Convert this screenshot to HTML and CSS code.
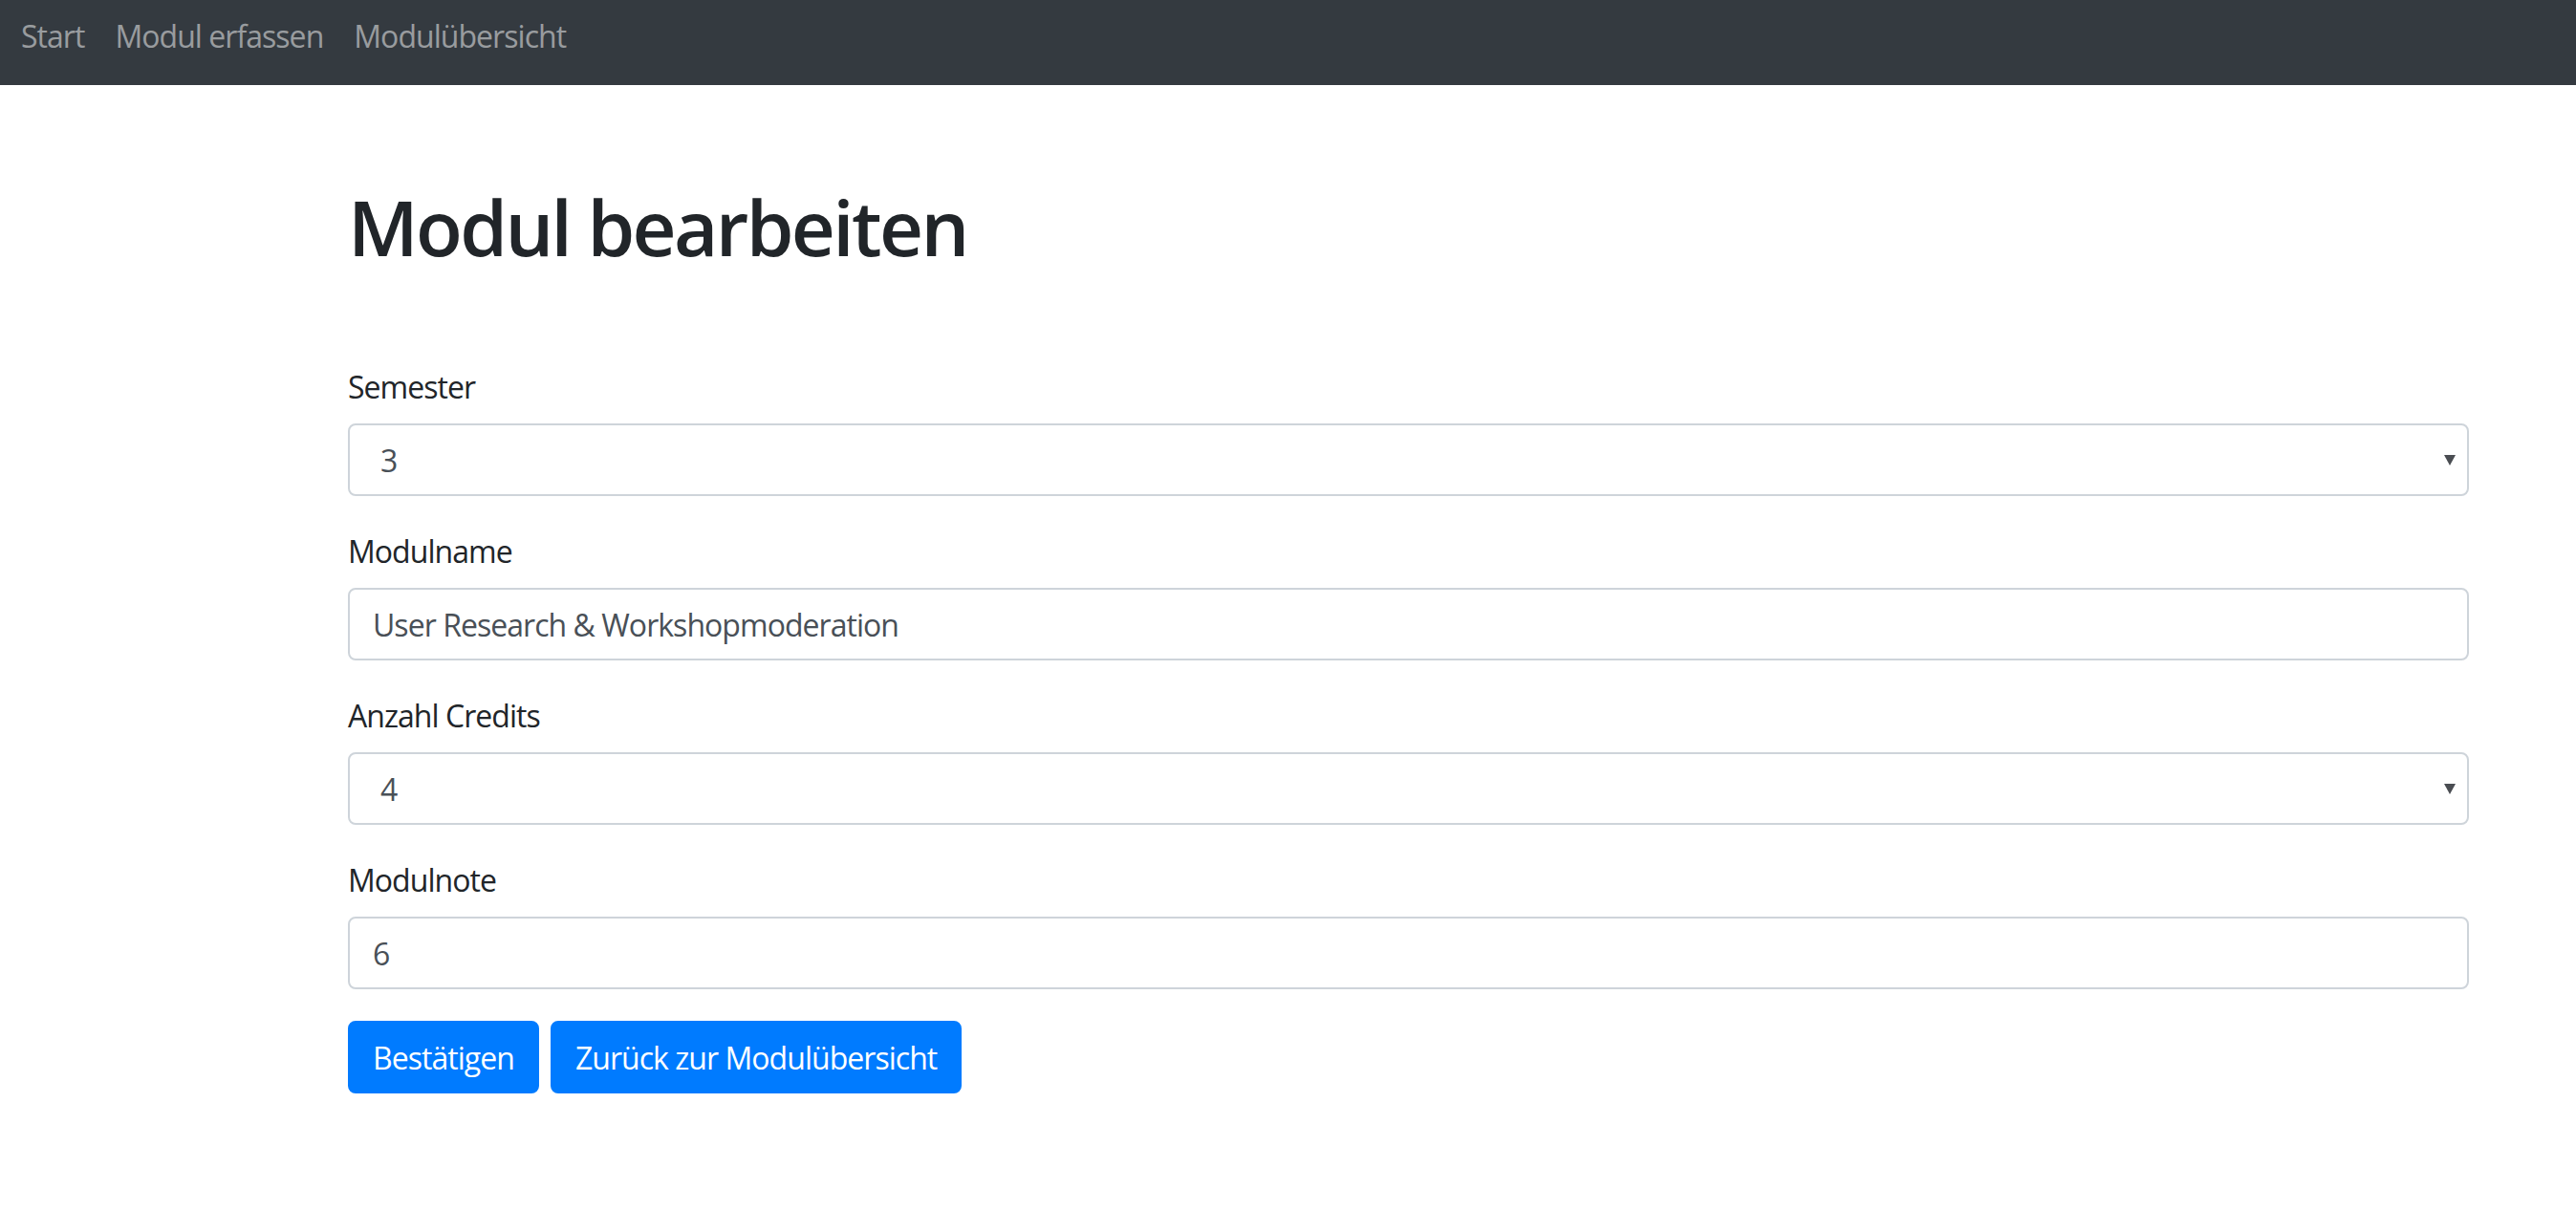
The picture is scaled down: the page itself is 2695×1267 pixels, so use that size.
FILE: index.html
```html
<!DOCTYPE html>
<html lang="de">
<head>
<meta charset="utf-8">
<title>Modul bearbeiten</title>
<link rel="stylesheet" href="styles.css">
</head>
<body>
<nav class="navbar">
  <a class="nav-link" href="#">Start</a>
  <a class="nav-link" href="#">Modul erfassen</a>
  <a class="nav-link" href="#">Modulübersicht</a>
</nav>
<main class="container">
  <h1 class="title">Modul bearbeiten</h1>
  <form class="form">
    <div class="form-group">
      <label class="label" for="semester">Semester</label>
      <div class="select-wrap">
        <select class="control select" id="semester">
          <option>3</option>
        </select>
      </div>
    </div>
    <div class="form-group">
      <label class="label" for="name">Modulname</label>
      <input class="control" id="name" type="text" value="User Research &amp; Workshopmoderation">
    </div>
    <div class="form-group">
      <label class="label" for="credits">Anzahl Credits</label>
      <div class="select-wrap">
        <select class="control select" id="credits">
          <option>4</option>
        </select>
      </div>
    </div>
    <div class="form-group form-group-last">
      <label class="label" for="note">Modulnote</label>
      <input class="control" id="note" type="text" value="6">
    </div>
    <div class="actions">
      <button class="btn" type="button">Bestätigen</button>
      <button class="btn" type="button">Zurück zur Modulübersicht</button>
    </div>
  </form>
</main>
</body>
</html>
```
FILE: styles.css
```css
* { box-sizing: border-box; }
html, body { margin: 0; background: #fff; }
body {
  font-family: "Open Sans", "Noto Sans", "Liberation Sans", sans-serif;
  font-size: 32px;
  line-height: 48px;
  letter-spacing: -0.03em;
  color: #212529;
}
.navbar {
  height: 89px;
  background: #343a40;
  display: flex;
  align-items: center;
  padding: 0 0 14px 6px;
}
.nav-link {
  color: rgba(255,255,255,.5);
  text-decoration: none;
  padding: 0 16px;
  font-size: 32px;
}
.container {
  padding: 0 112px 0 364px;
}
.title {
  font-size: 80px;
  font-weight: 600;
  line-height: 96px;
  letter-spacing: -0.033em;
  margin: 100px 0 96px;
}
.form-group { margin-bottom: 34px; }
.form-group-last { margin-bottom: 33px; }
.label {
  display: block;
  margin-bottom: 14px;
}
.control {
  display: block;
  width: 100%;
  height: 76px;
  padding: 0 24px;
  font-family: inherit;
  font-size: 32px;
  letter-spacing: inherit;
  color: #495057;
  background: #fff;
  border: 2px solid #ced4da;
  border-radius: 8px;
  outline: none;
}
.select-wrap { position: relative; }
.select {
  appearance: none;
  -webkit-appearance: none;
  padding-left: 32px;
}
.select-wrap::after {
  content: "";
  position: absolute;
  right: 14px;
  top: 33px;
  border-left: 6px solid transparent;
  border-right: 6px solid transparent;
  border-top: 11px solid #4a4d52;
}
.actions {
  display: flex;
  gap: 12px;
}
.btn {
  height: 76px;
  padding: 0 24px;
  font-family: inherit;
  font-size: 32px;
  letter-spacing: inherit;
  color: #fff;
  background: #007bff;
  border: 2px solid #007bff;
  border-radius: 8px;
}
```
